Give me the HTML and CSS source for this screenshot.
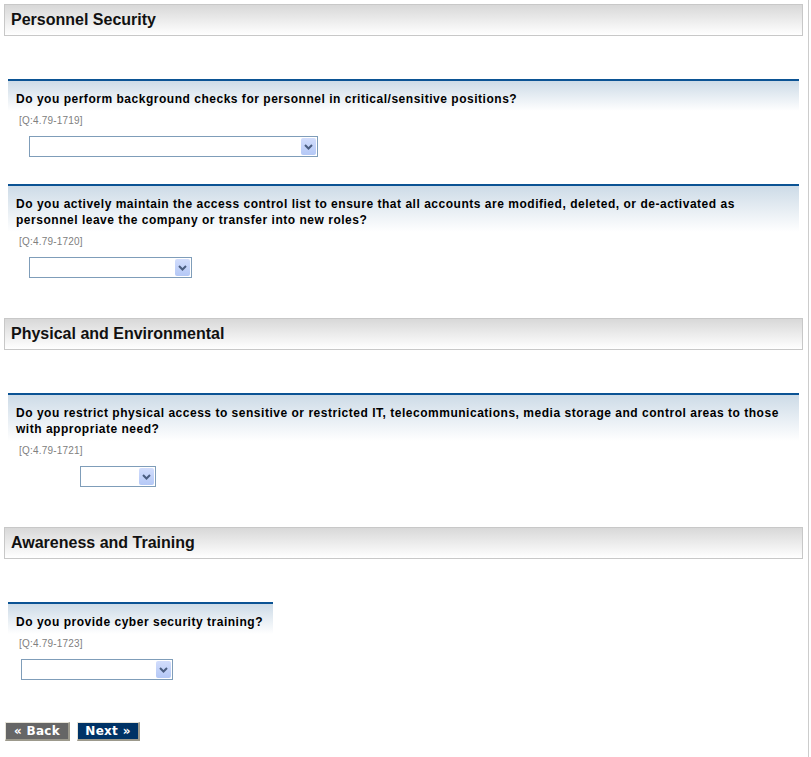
FILE: index.html
```html
<!DOCTYPE html>
<html lang="en">
<head>
    <meta charset="UTF-8">
    <title>Assessment</title>
    <link rel="stylesheet" href="styles.css">
</head>
<body>
    <div class="page">
        <div class="section-head">Personnel Security</div>
        <div class="section-body">
            <div class="question">
                <div class="q-head">Do you perform background checks for personnel in critical/sensitive positions?</div>
                <div class="q-code">[Q:4.79-1719]</div>
                <span class="pick pick-1">
                    <select></select>
                    <span class="pick-btn"><svg width="9" height="6" viewBox="0 0 9 6"><path d="M1 1 L4.5 4.5 L8 1" fill="none" stroke="#4a5d80" stroke-width="2"/></svg></span>
                </span>
            </div>
            <div class="question">
                <div class="q-head">Do you actively maintain the access control list to ensure that all accounts are modified, deleted, or de-activated as personnel leave the company or transfer into new roles?</div>
                <div class="q-code">[Q:4.79-1720]</div>
                <span class="pick pick-2">
                    <select></select>
                    <span class="pick-btn"><svg width="9" height="6" viewBox="0 0 9 6"><path d="M1 1 L4.5 4.5 L8 1" fill="none" stroke="#4a5d80" stroke-width="2"/></svg></span>
                </span>
            </div>
        </div>

        <div class="section-head">Physical and Environmental</div>
        <div class="section-body">
            <div class="question">
                <div class="q-head">Do you restrict physical access to sensitive or restricted IT, telecommunications, media storage and control areas to those with appropriate need?</div>
                <div class="q-code">[Q:4.79-1721]</div>
                <span class="pick pick-3">
                    <select></select>
                    <span class="pick-btn"><svg width="9" height="6" viewBox="0 0 9 6"><path d="M1 1 L4.5 4.5 L8 1" fill="none" stroke="#4a5d80" stroke-width="2"/></svg></span>
                </span>
            </div>
        </div>

        <div class="section-head">Awareness and Training</div>
        <div class="section-body">
            <div class="question narrow">
                <div class="q-head">Do you provide cyber security training?</div>
                <div class="q-code">[Q:4.79-1723]</div>
                <span class="pick pick-4">
                    <select></select>
                    <span class="pick-btn"><svg width="9" height="6" viewBox="0 0 9 6"><path d="M1 1 L4.5 4.5 L8 1" fill="none" stroke="#4a5d80" stroke-width="2"/></svg></span>
                </span>
            </div>
        </div>

        <div class="nav">
            <button class="btn btn-back">&laquo; Back</button>
            <button class="btn btn-next">Next &raquo;</button>
        </div>
    </div>
</body>
</html>
```

FILE: styles.css
```css
body {
    margin: 0;
    background: #fff;
    font-family: "Liberation Sans", Arial, sans-serif;
}
.page {
    width: 799px;
    min-height: 100vh;
    padding: 4px 5px 0 0;
    margin-left: 4px;
    border-right: 1px solid #cccccc;
    box-sizing: content-box;
}
.section-head {
    height: 30px;
    line-height: 30px;
    border: 1px solid #c8c8c8;
    background: linear-gradient(#d8d8d8, #ffffff);
    padding-left: 6px;
    font-size: 16px;
    font-weight: bold;
    color: #111;
}
.section-body {
    padding-top: 43px;
    margin-bottom: 13px;
}
.question {
    margin: 0 4px;
    padding-bottom: 27px;
}
.question.narrow {
    width: fit-content;
}
.q-head {
    border-top: 2px solid #0b5394;
    background: linear-gradient(#cddbe7, #ffffff);
    padding: 10px 10px 4px 8px;
    font-size: 12px;
    line-height: 16px;
    font-weight: bold;
    letter-spacing: 0.52px;
    color: #000;
}
.q-code {
    margin: 3px 0 0 11px;
    font-size: 10px;
    line-height: 14px;
    letter-spacing: 0.2px;
    color: #808080;
}
.pick {
    position: relative;
    display: block;
    height: 21px;
    margin-top: 8px;
}
.pick select {
    appearance: none;
    width: 100%;
    height: 21px;
    border: 1px solid #7f9db9;
    background: #fff;
    margin: 0;
    padding: 0;
}
.pick-btn {
    position: absolute;
    top: 2px;
    right: 2px;
    width: 15px;
    height: 17px;
    border-radius: 2px;
    background: linear-gradient(#d2ddfc, #b4c8f6);
    display: flex;
    align-items: center;
    justify-content: center;
}
.pick-1 { width: 289px; margin-left: 21px; }
.pick-2 { width: 163px; margin-left: 21px; }
.pick-3 { width: 76px; margin-left: 72px; }
.pick-4 { width: 152px; margin-left: 13px; }
.nav {
    padding: 2px 0 0 1px;
    display: flex;
    gap: 7px;
}
.btn {
    font-family: "DejaVu Sans", Verdana, sans-serif;
    font-size: 12px;
    font-weight: bold;
    letter-spacing: 0.3px;
    color: #fff;
    height: 19px;
    line-height: 15px;
    padding: 0 6px;
    border-style: solid;
    border-width: 1px 2px 2px 1px;
    border-color: #e6e3d8 #9c998c #9c998c #e6e3d8;
    cursor: pointer;
}
.btn-back { background: #666666; width: 65px; }
.btn-next { background: #003366; width: 63px; }
```
